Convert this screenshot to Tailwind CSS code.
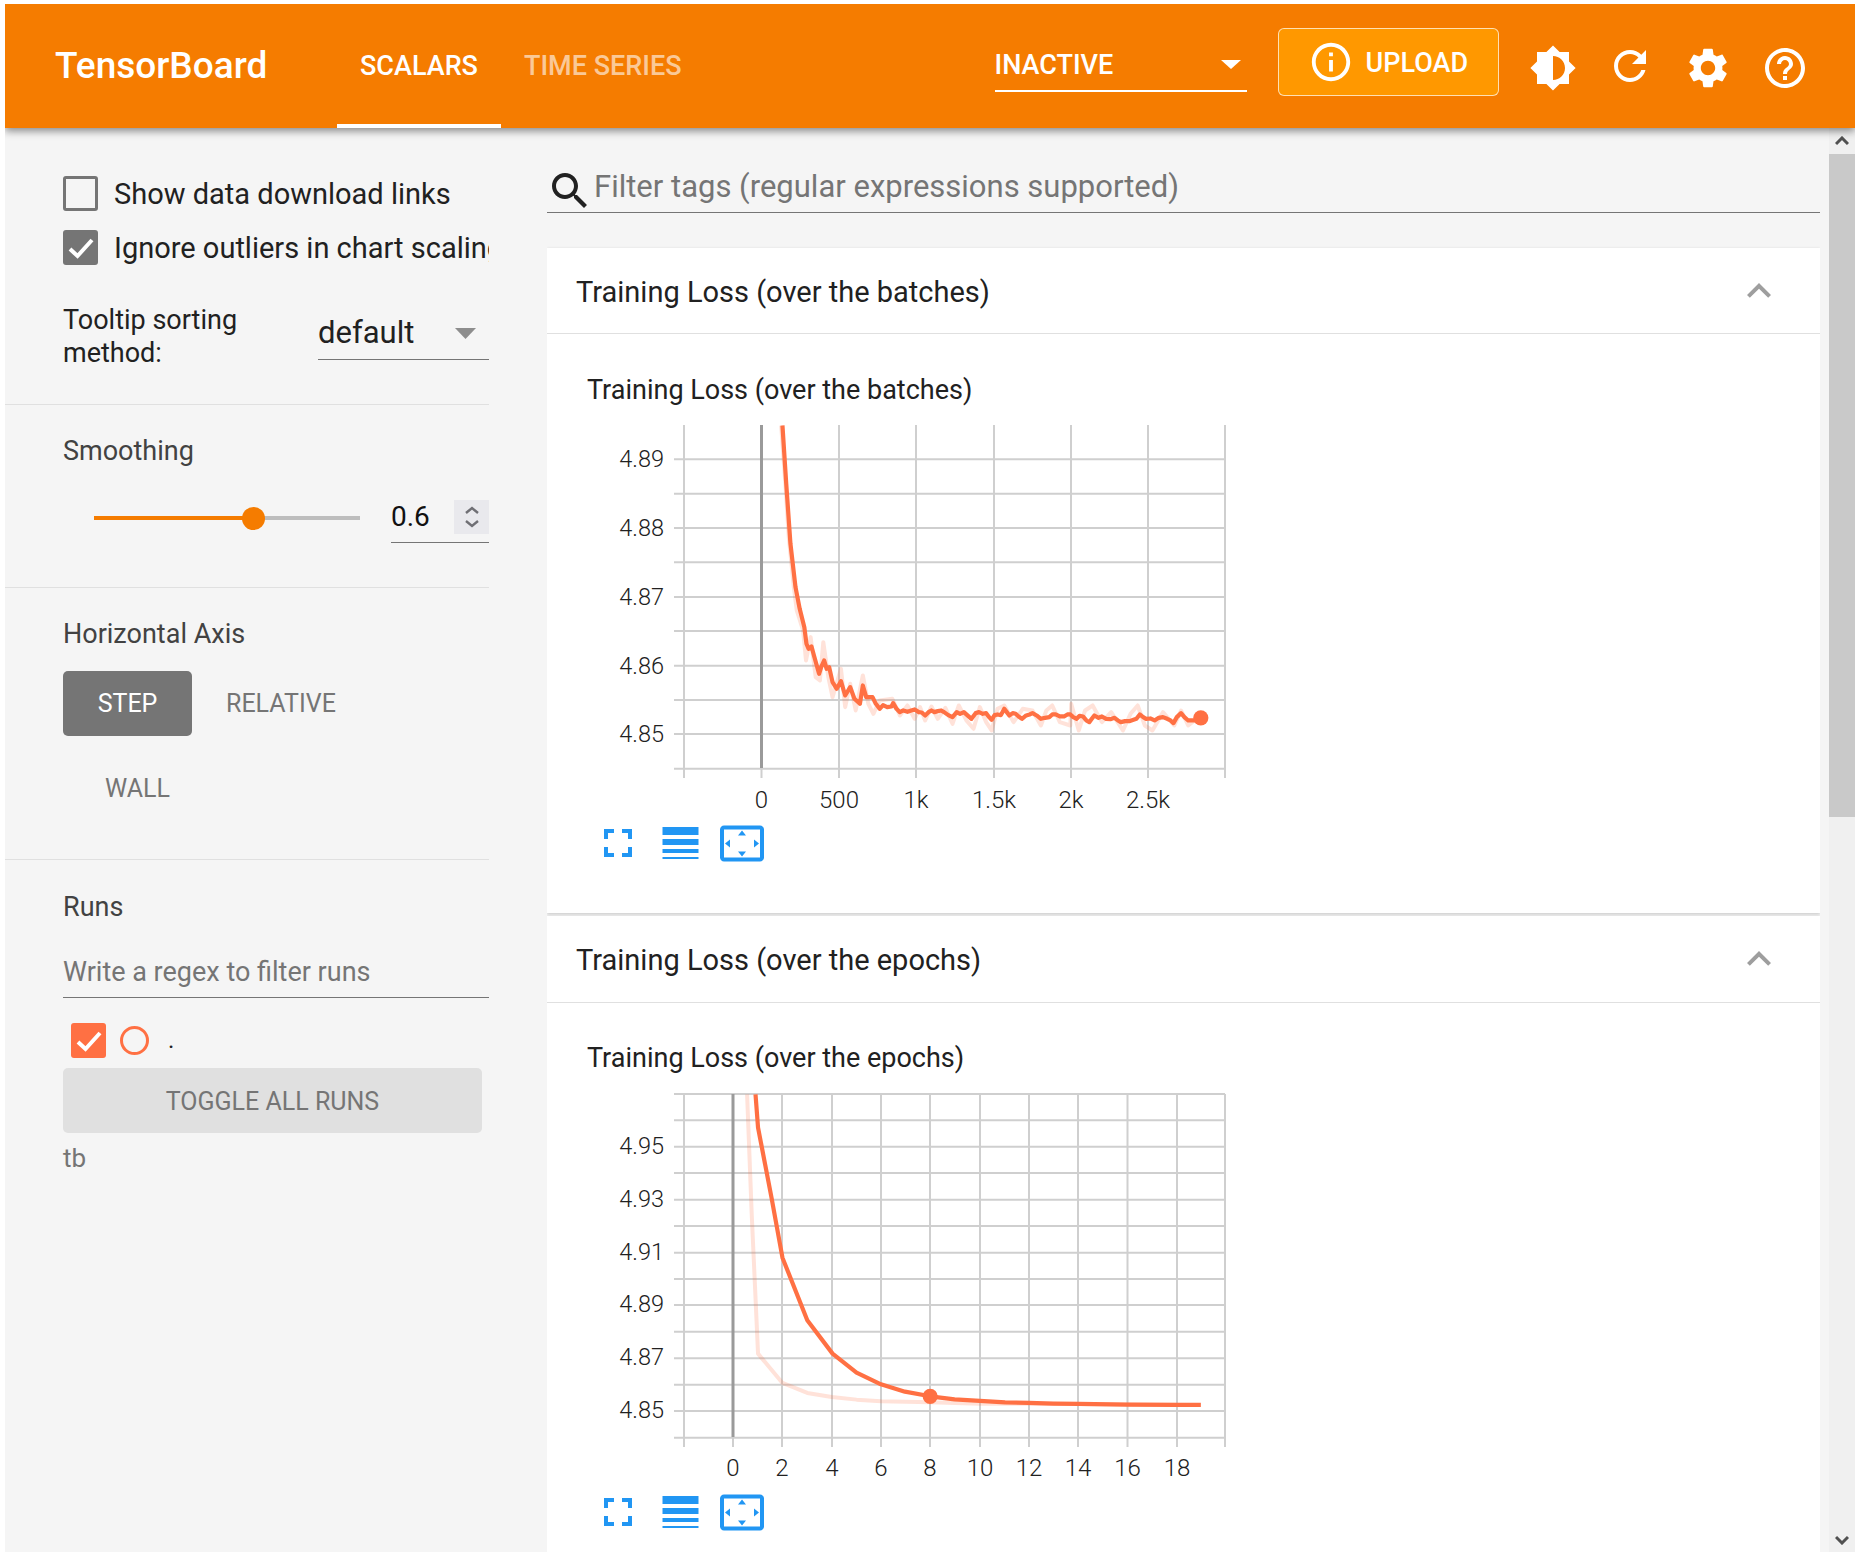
<!DOCTYPE html>
<html>
<head>
<meta charset="utf-8">
<script src="https://cdn.jsdelivr.net/npm/@tailwindcss/browser@4"></script>
</head>
<body class="bg-white">
<div class="w-[1850px] h-[1548px] ml-[5px] mt-[4px] bg-[#f5f5f5] overflow-hidden flex flex-col font-['Roboto',sans-serif] text-[#212121]">
  <header class="relative z-10 h-[124px] shrink-0 bg-[#f57c00] text-white shadow-[0_3px_8px_rgba(0,0,0,0.45)] flex items-start">
    <div class="ml-[50px] mt-[39px] w-[282px] text-[37px] leading-[46px] font-medium">TensorBoard</div>
    <div class="h-[124px] w-[164px] border-b-4 border-white flex justify-center pt-[45px] text-[27px] leading-[34px] font-medium">SCALARS</div>
    <div class="ml-[23px] pt-[45px] text-[27px] leading-[34px] font-medium text-white/60">TIME SERIES</div>
    <div class="ml-[313px] mt-[35px] w-[252px] h-[53px] border-b-2 border-white flex justify-between pt-[9px] pr-[6px]">
      <span class="text-[27px] leading-[34px] font-medium">INACTIVE</span>
      <svg width="20" height="9" class="mt-[12px]"><path d="M0 0h20L10 9z" fill="#fff"/></svg>
    </div>
    <div class="ml-[31px] mt-[24px] w-[221px] h-[68px] bg-[#ff9800] border border-white/70 rounded-[6px] flex items-center pl-[29px]">
      <svg width="46" height="46" viewBox="0 0 24 24" fill="#fff"><path d="M11 17h2v-6h-2v6zm1-15C6.48 2 2 6.48 2 12s4.48 10 10 10 10-4.48 10-10S17.52 2 12 2zm0 18c-4.41 0-8-3.59-8-8s3.59-8 8-8 8 3.59 8 8-3.59 8-8 8zM11 9h2V7h-2v2z"/></svg>
      <span class="ml-[12px] mt-[2px] text-[27px] leading-[34px] font-medium">UPLOAD</span>
    </div>
    <div class="ml-[30px] mt-[40px] flex gap-[29px]">
      <svg width="48" height="48" viewBox="0 0 24 24" fill="#fff"><path d="M20 15.31L23.31 12 20 8.69V4h-4.69L12 .69 8.69 4H4v4.69L.69 12 4 15.31V20h4.69L12 23.31 15.31 20H20v-4.69zM12 18V6c3.31 0 6 2.69 6 6s-2.69 6-6 6z"/></svg>
      <svg width="48" height="48" viewBox="0 0 24 24" fill="#fff" class="-mt-[2px]"><path d="M17.65 6.35C16.2 4.9 14.21 4 12 4c-4.42 0-7.99 3.58-7.99 8s3.57 8 7.99 8c3.73 0 6.84-2.55 7.73-6h-2.08c-.82 2.33-3.04 4-5.65 4-3.31 0-6-2.69-6-6s2.69-6 6-6c1.66 0 3.14.69 4.22 1.78L13 11h7V4l-2.35 2.35z"/></svg>
      <svg width="48" height="48" viewBox="0 0 24 24" fill="#fff" class="ml-[1px]"><path d="M19.14 12.94c.04-.3.06-.61.06-.94 0-.32-.02-.64-.07-.94l2.03-1.58c.18-.14.23-.41.12-.61l-1.92-3.32c-.12-.22-.37-.29-.59-.22l-2.39.96c-.5-.38-1.03-.7-1.62-.94l-.36-2.54c-.04-.24-.24-.41-.48-.41h-3.84c-.24 0-.43.17-.47.41l-.36 2.54c-.59.24-1.13.57-1.62.94l-2.39-.96c-.22-.08-.47 0-.59.22L2.74 8.87c-.12.21-.08.47.12.61l2.03 1.58c-.05.3-.09.63-.09.94s.02.64.07.94l-2.03 1.58c-.18.14-.23.41-.12.61l1.92 3.32c.12.22.37.29.59.22l2.39-.96c.5.38 1.03.7 1.62.94l.36 2.54c.05.24.24.41.48.41h3.84c.24 0 .44-.17.47-.41l.36-2.54c.59-.24 1.13-.56 1.62-.94l2.39.96c.22.08.47 0 .59-.22l1.92-3.32c.12-.22.07-.47-.12-.61l-2.01-1.58zM12 15.6c-1.98 0-3.6-1.62-3.6-3.6s1.62-3.6 3.6-3.6 3.6 1.62 3.6 3.6-1.62 3.6-3.6 3.6z"/></svg>
      <svg width="48" height="48" viewBox="0 0 24 24" fill="#fff"><path d="M11 18h2v-2h-2v2zm1-16C6.48 2 2 6.48 2 12s4.48 10 10 10 10-4.48 10-10S17.52 2 12 2zm0 18c-4.41 0-8-3.59-8-8s3.59-8 8-8 8 3.59 8 8-3.59 8-8 8zm0-14c-2.21 0-4 1.79-4 4h2c0-1.1.9-2 2-2s2 .9 2 2c0 2-3 1.75-3 5h2c0-2.25 3-2.5 3-5 0-2.21-1.79-4-4-4z"/></svg>
    </div>
  </header>

  <div class="flex flex-1 min-h-0">
    <!-- sidebar -->
    <aside class="w-[484px] shrink-0 text-[29px] leading-[33px]">
      <section class="h-[277px] border-b border-[#e0e0e0] pl-[58px] pt-[48px]">
        <div class="flex items-center h-[35px]">
          <span class="w-[35px] h-[35px] rounded-[3px] border-[3px] border-[#757575] shrink-0"></span>
          <span class="ml-[16px] mt-[2px] whitespace-nowrap">Show data download links</span>
        </div>
        <div class="flex items-center h-[35px] mt-[19px] overflow-hidden">
          <span class="w-[35px] h-[35px] rounded-[3px] bg-[#757575] shrink-0 flex items-center justify-center">
            <svg width="26" height="22" viewBox="0 0 26 22"><path d="M2 12l7.5 7L24 3" fill="none" stroke="#fff" stroke-width="4"/></svg>
          </span>
          <span class="ml-[16px] mt-[2px] whitespace-nowrap">Ignore outliers in chart scaling</span>
        </div>
        <div class="flex mt-[39px]">
          <div class="w-[255px] text-[27px] leading-[33px]">Tooltip sorting<br>method:</div>
          <div class="w-[171px] h-[56px] border-b border-[#757575] flex justify-between pr-[13px] text-[31px] leading-[58px]">
            <span>default</span>
            <svg width="21" height="11" class="mt-[24px]"><path d="M0 0h21L10.5 11z" fill="#8d8d8d"/></svg>
          </div>
        </div>
      </section>

      <section class="h-[183px] border-b border-[#e0e0e0] pl-[58px] pt-[30px]">
        <div class="text-[27px] leading-[33px] text-[#424242]">Smoothing</div>
        <div class="flex mt-[32px]">
          <div class="relative w-[266px] h-[34px] ml-[31px] mt-[1px] flex items-center">
            <div class="w-[159px] h-[4px] bg-[#f57c00]"></div>
            <div class="w-[107px] h-[4px] bg-[#bdbdbd]"></div>
            <div class="absolute left-[148px] top-[6px] w-[23px] h-[23px] rounded-full bg-[#f57c00]"></div>
          </div>
          <div class="ml-[31px] w-[98px] h-[43px] border-b border-[#757575] flex justify-between items-start">
            <span class="text-[#111] text-[28px] leading-[34px]">0.6</span>
            <span class="w-[35px] h-[34px] bg-[#e9e9ed] flex items-center justify-center">
              <svg width="14" height="24" viewBox="0 0 14 24"><path d="M1 8l6-5 6 5M1 16l6 5 6-5" fill="none" stroke="#6f6f74" stroke-width="2.4"/></svg>
            </span>
          </div>
        </div>
      </section>

      <section class="h-[272px] border-b border-[#e0e0e0] pl-[58px] pt-[30px]">
        <div class="text-[27px] leading-[33px] text-[#424242]">Horizontal Axis</div>
        <div class="flex items-center mt-[20px]">
          <div class="w-[129px] h-[65px] rounded-[5px] bg-[#757575] text-white text-[25px] flex items-center justify-center">STEP</div>
          <div class="ml-[34px] text-[25px] text-[#757575]">RELATIVE</div>
        </div>
        <div class="ml-[42px] mt-[36px] text-[25px] text-[#757575]">WALL</div>
      </section>

      <section class="pl-[58px] pt-[31px]">
        <div class="text-[27px] leading-[33px] text-[#424242]">Runs</div>
        <div class="mt-[31px] w-[426px] h-[43px] border-b border-[#757575] text-[27px] leading-[34px] text-[#757575]">Write a regex to filter runs</div>
        <div class="flex items-center mt-[25px] h-[35px] pl-[8px]">
          <span class="w-[35px] h-[35px] rounded-[3px] bg-[#ff7043] flex items-center justify-center">
            <svg width="26" height="22" viewBox="0 0 26 22"><path d="M2 12l7.5 7L24 3" fill="none" stroke="#fff" stroke-width="4"/></svg>
          </span>
          <span class="ml-[14px] w-[29px] h-[29px] rounded-full border-[3px] border-[#ff7043]"></span>
          <span class="ml-[19px] text-[#212121] text-[24px] leading-[35px]">.</span>
        </div>
        <div class="mt-[10px] w-[419px] h-[65px] rounded-[5px] bg-[#e0e0e0] text-[25px] text-[#757575] flex items-center justify-center pt-[2px]">TOGGLE ALL RUNS</div>
        <div class="mt-[9px] text-[26px] text-[#757575]">tb</div>
      </section>
    </aside>

    <!-- main -->
    <main class="w-[1273px] ml-[58px] shrink-0 overflow-hidden">
      <div class="h-[85px] flex items-start border-b border-[#757575] pt-[39px]">
        <svg width="48" height="48" viewBox="0 0 24 24" fill="#212121" class="-ml-[1px]"><path d="M15.5 14h-.79l-.28-.27C15.41 12.59 16 11.11 16 9.5 16 5.91 13.09 3 9.5 3S3 5.91 3 9.5 5.91 16 9.5 16c1.61 0 3.09-.59 4.23-1.57l.27.28v.79l5 4.99L20.49 19l-4.99-5zm-6 0C7.01 14 5 11.99 5 9.5S7.01 5 9.5 5 14 7.01 14 9.5 11.99 14 9.5 14z"/></svg>
        <span class="text-[31px] leading-[40px] text-[#757575]">Filter tags (regular expressions supported)</span>
      </div>

      <article class="mt-[35px] h-[665px] bg-white shadow-[0_1px_3px_rgba(0,0,0,0.2)]">
        <div class="h-[86px] border-b border-[#e0e0e0] flex items-center justify-between pl-[29px] pr-[37px]">
          <span class="text-[29px] mt-[5px]">Training Loss (over the batches)</span>
          <svg width="48" height="48" viewBox="0 0 24 24" fill="#9e9e9e"><path d="M12 8l-6 6 1.41 1.41L12 10.83l4.59 4.58L18 14z"/></svg>
        </div>
        <div class="pl-[40px] pt-[39px] text-[27px] leading-[34px]">Training Loss (over the batches)</div>
        <svg class="block ml-[40px] mt-[17px]" width="640" height="450" viewBox="587 424 640 450" font-family="Roboto" font-size="24" fill="#212121">
          <g stroke="#cfcfcf" stroke-width="2" fill="none">
            <path d="M674 459.3H1225M674 493.7H1225M674 528H1225M674 562.3H1225M674 597H1225M674 631H1225M674 665.7H1225M674 700H1225M674 734H1225M674 768.7H1225"/>
            <path d="M684 425V778M839 425V778M916 425V778M994 425V778M1071 425V778M1148 425V778M1225 425V778"/>
          </g>
          <path d="M761.5 425V768" stroke="#9a9a9a" stroke-width="3"/>
          <path d="M761.5 768V778" stroke="#cfcfcf" stroke-width="2"/>
          <g text-anchor="end" font-weight="300" font-size="23.5">
            <text x="664" y="466.5">4.89</text><text x="664" y="535.5">4.88</text><text x="664" y="604.5">4.87</text><text x="664" y="673.5">4.86</text><text x="664" y="742">4.85</text>
          </g>
          <g text-anchor="middle" font-weight="300">
            <text x="761.5" y="808">0</text><text x="839" y="808">500</text><text x="916" y="808">1k</text><text x="994" y="808">1.5k</text><text x="1071" y="808">2k</text><text x="1148" y="808">2.5k</text>
          </g>
          <g transform="translate(580 410.5) scale(.4209 .3333)" fill="none" stroke-linejoin="round">
            <polyline vector-effect="non-scaling-stroke" stroke="#ff7043" stroke-opacity=".2" stroke-width="4" points="478,45 488,220 496,380 508,530 515,600 530,660 537,750 548,680 560,800 570,810 578,695 590,800 600,860 620,775 630,890 642,820 655,900 672,795 685,880 697,910 712,870 742,865 760,915 778,885 795,925 808,890 820,930 835,888 850,925 868,892 885,940 900,885 918,930 935,955 950,890 965,935 978,960 992,895 1008,885 1030,935 1052,895 1075,900 1095,945 1108,900 1122,885 1140,935 1165,945 1167,880 1185,960 1200,900 1218,885 1240,935 1262,905 1290,960 1308,910 1325,885 1342,945 1360,960 1385,905 1412,945 1428,900 1445,945 1475,915"/>
            <polyline vector-effect="non-scaling-stroke" stroke="#ff7043" stroke-width="4.2" points="481,45 490,220 500,400 512,530 522,595 533,650 538,700 543,715 550,708 558,745 568,790 573,770 580,750 586,775 592,770 600,815 610,835 620,812 630,855 642,830 652,865 665,880 672,825 680,860 695,860 702,878 712,895 720,884 730,890 740,888 744,878 752,895 760,905 768,900 778,904 787,900 795,897 805,905 812,906 820,915 828,905 835,900 842,905 850,902 858,900 865,905 875,914 885,920 895,905 903,910 912,905 920,914 930,925 940,908 948,905 957,910 965,908 972,920 978,928 985,914 992,912 1000,914 1008,895 1014,905 1020,915 1028,908 1035,910 1042,918 1050,925 1060,915 1068,912 1075,908 1085,915 1095,925 1105,922 1115,920 1122,912 1130,912 1140,918 1150,918 1158,912 1165,912 1172,920 1180,925 1187,916 1195,918 1203,930 1210,935 1216,925 1222,915 1232,922 1240,918 1250,925 1260,926 1270,922 1278,930 1285,935 1295,932 1305,932 1315,928 1322,925 1330,912 1338,920 1345,925 1355,924 1365,930 1375,922 1385,920 1395,925 1403,930 1410,938 1418,920 1428,908 1436,920 1445,930 1460,930 1475,922"/>
            <ellipse cx="1475" cy="922" rx="18" ry="23" fill="#ff7043"/>
          </g>
          <g transform="translate(9 -5)" fill="#2196f3">
            <svg x="585" y="824" width="48" height="48" viewBox="0 0 24 24"><path d="M7 14H5v5h5v-2H7v-3zm-2-4h2V7h3V5H5v5zm12 7h-3v2h5v-5h-2v3zM14 5v2h3v3h2V5h-5z"/></svg>
            <svg x="647.5" y="824" width="48" height="48" viewBox="0 0 24 24"><path d="M3 17h18v-2H3v2zm0 3h18v-1H3v1zm0-7h18v-3H3v3zm0-9v4h18V4H3z"/></svg>
            <svg x="709" y="824.5" width="48" height="48" viewBox="0 0 24 24"><path d="M12.01 5.5L10 8h4l-1.99-2.5zM18 10v4l2.5-1.99L18 10zM6 10l-2.5 2.01L6 14v-4zm8 6h-4l2.01 2.5L14 16zm7-13H3c-1.1 0-2 .9-2 2v14c0 1.1.9 2 2 2h18c1.1 0 2-.9 2-2V5c0-1.1-.9-2-2-2zm0 16.01H3V4.99h18v14.02z"/></svg>
          </g>
        </svg>
      </article>

      <article class="mt-[3px] h-[700px] bg-white shadow-[0_1px_3px_rgba(0,0,0,0.2)]">
        <div class="h-[87px] border-b border-[#e0e0e0] flex items-center justify-between pl-[29px] pr-[37px]">
          <span class="text-[29px] mt-[4px]">Training Loss (over the epochs)</span>
          <svg width="48" height="48" viewBox="0 0 24 24" fill="#9e9e9e"><path d="M12 8l-6 6 1.41 1.41L12 10.83l4.59 4.58L18 14z"/></svg>
        </div>
        <div class="pl-[40px] pt-[38px] text-[27px] leading-[34px]">Training Loss (over the epochs)</div>
        <svg class="block ml-[40px] mt-[18px]" width="640" height="450" viewBox="587 1092 640 450" font-family="Roboto" font-size="24" fill="#212121">
          <g stroke="#cfcfcf" stroke-width="2" fill="none">
            <path d="M674 1093H1225M674 1119.3H1225M674 1145.7H1225M674 1172H1225M674 1198.7H1225M674 1225H1225M674 1251.7H1225M674 1278H1225M674 1304H1225M674 1330.7H1225M674 1357.3H1225M674 1383.7H1225M674 1410H1225M674 1436.7H1225"/>
            <path d="M684 1093V1446M782 1093V1446M832 1093V1446M881 1093V1446M930 1093V1446M980 1093V1446M1029 1093V1446M1078 1093V1446M1127.5 1093V1446M1177 1093V1446M1225 1093V1446"/>
          </g>
          <path d="M733 1093V1436" stroke="#9a9a9a" stroke-width="3"/>
          <path d="M733 1436V1446" stroke="#cfcfcf" stroke-width="2"/>
          <g text-anchor="end" font-weight="300" font-size="23.5">
            <text x="664" y="1153">4.95</text><text x="664" y="1206">4.93</text><text x="664" y="1259">4.91</text><text x="664" y="1311">4.89</text><text x="664" y="1364">4.87</text><text x="664" y="1417">4.85</text>
          </g>
          <g text-anchor="middle" font-weight="300">
            <text x="733" y="1475">0</text><text x="782" y="1475">2</text><text x="832" y="1475">4</text><text x="881" y="1475">6</text><text x="930" y="1475">8</text><text x="980" y="1475">10</text><text x="1029" y="1475">12</text><text x="1078" y="1475">14</text><text x="1127.5" y="1475">16</text><text x="1177" y="1475">18</text>
          </g>
          <g transform="translate(580 1080) scale(.4209 .3333)" fill="none" stroke-linejoin="round">
            <polyline vector-effect="non-scaling-stroke" stroke="#ff7043" stroke-opacity=".2" stroke-width="4" points="397,40 408,400 423,818 481,906 540,936 598,948 657,956 715,961 832,964 950,968 1066,968 1184,969 1475,972"/>
            <polyline vector-effect="non-scaling-stroke" stroke="#ff7043" stroke-width="4.2" points="417,40 423,140 455,350 481,530 540,718 600,818 657,875 715,910 772,932 832,946 890,955 950,960 1010,964 1066,966 1125,968 1184,969 1300,971 1418,972 1475,972"/>
            <ellipse cx="832" cy="946" rx="18" ry="23" fill="#ff7043"/>
          </g>
          <g transform="translate(9 -5)" fill="#2196f3">
            <svg x="585" y="1492" width="48" height="48" viewBox="0 0 24 24"><path d="M7 14H5v5h5v-2H7v-3zm-2-4h2V7h3V5H5v5zm12 7h-3v2h5v-5h-2v3zM14 5v2h3v3h2V5h-5z"/></svg>
            <svg x="647.5" y="1492" width="48" height="48" viewBox="0 0 24 24"><path d="M3 17h18v-2H3v2zm0 3h18v-1H3v1zm0-7h18v-3H3v3zm0-9v4h18V4H3z"/></svg>
            <svg x="709" y="1492.5" width="48" height="48" viewBox="0 0 24 24"><path d="M12.01 5.5L10 8h4l-1.99-2.5zM18 10v4l2.5-1.99L18 10zM6 10l-2.5 2.01L6 14v-4zm8 6h-4l2.01 2.5L14 16zm7-13H3c-1.1 0-2 .9-2 2v14c0 1.1.9 2 2 2h18c1.1 0 2-.9 2-2V5c0-1.1-.9-2-2-2zm0 16.01H3V4.99h18v14.02z"/></svg>
          </g>
        </svg>
      </article>
    </main>

    <!-- scrollbar -->
    <div class="ml-[9px] w-[26px] flex flex-col bg-[#f0f0f0]">
      <div class="h-[26px] flex items-center justify-center">
        <svg width="14" height="10" viewBox="0 0 14 10"><path d="M1 8l6-6 6 6" fill="none" stroke="#505050" stroke-width="3"/></svg>
      </div>
      <div class="h-[663px] bg-[#c9c9c9]"></div>
      <div class="flex-1 flex items-end justify-center pb-[7px]">
        <svg width="14" height="10" viewBox="0 0 14 10"><path d="M1 2l6 6 6-6" fill="none" stroke="#505050" stroke-width="3"/></svg>
      </div>
    </div>
  </div>
</div>
</body>
</html>
